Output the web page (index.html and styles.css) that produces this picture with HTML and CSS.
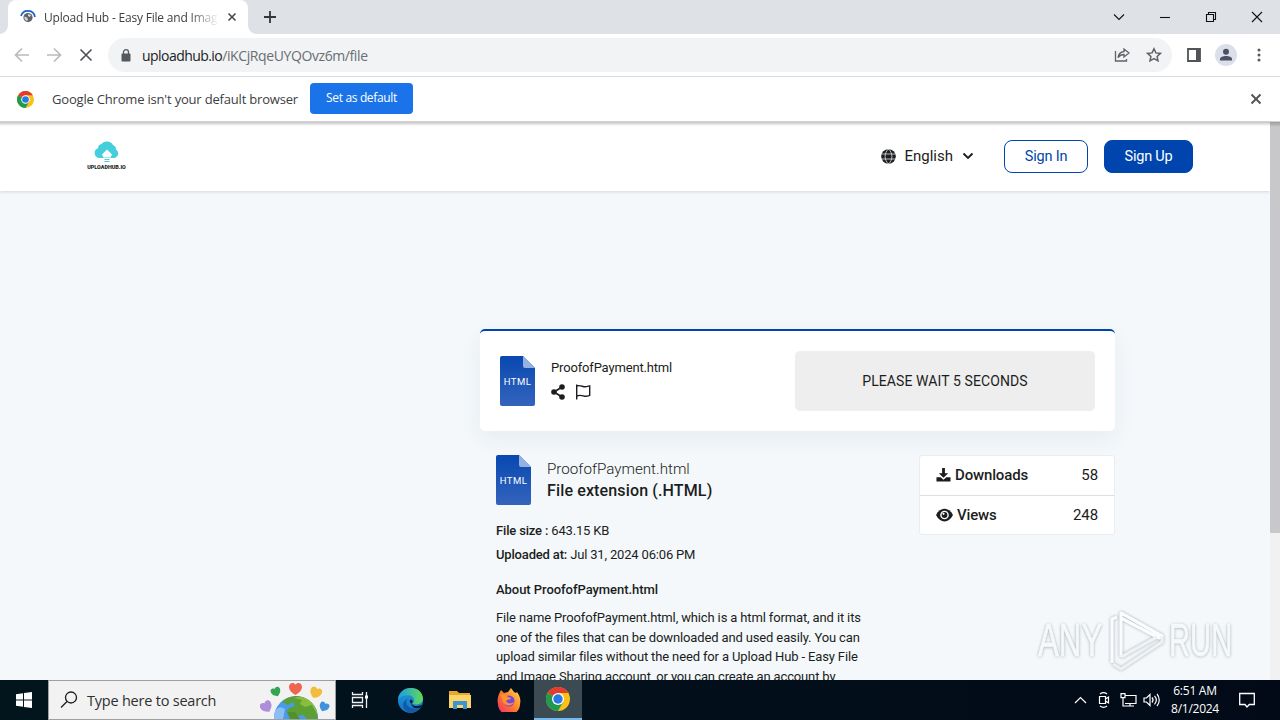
FILE: index.html
```html
<!DOCTYPE html>
<html lang="en">
  <head>
    <meta charset="UTF-8" />
    <title>Upload Hub - Easy File and Image Sharing</title>
    <link rel="stylesheet" href="styles.css">
  </head>
  <body>
    <svg width="0" height="0" class="defs">
      <defs>
        <linearGradient id="docFill" x1="0" y1="0" x2="0" y2="1">
          <stop offset="0" stop-color="#0848b0" />
          <stop offset="1" stop-color="#3464bd" />
        </linearGradient>
        <linearGradient id="edgeGreen" x1="0" y1="0" x2="1" y2="0">
          <stop offset="0" stop-color="#1b9de2" />
          <stop offset="1" stop-color="#62d957" />
        </linearGradient>
        <linearGradient id="edgeBlue" x1="0" y1="0" x2="0" y2="1">
          <stop offset="0" stop-color="#1b9fe0" />
          <stop offset="1" stop-color="#1470c4" />
        </linearGradient>
        <linearGradient id="foxFill" x1="1" y1="0" x2="0" y2="1">
          <stop offset="0" stop-color="#ffe14a" />
          <stop offset="0.5" stop-color="#ff7a2c" />
          <stop offset="1" stop-color="#f0256e" />
        </linearGradient>
        <symbol id="chrome" viewBox="0 0 24 24">
          <circle cx="12" cy="12" r="12" fill="#fbc116" />
          <path d="M12 12 1.6 6A12 12 0 0 1 22.4 6H12z" fill="#e33b2e" />
          <path d="M1.6 6A12 12 0 0 0 12 24l5.2-9-5.2-3z" fill="#229a4d" />
          <circle cx="12" cy="12" r="6" fill="#fff" />
          <circle cx="12" cy="12" r="4.700" fill="#2878e5" />
        </symbol>
        <symbol id="doc" viewBox="0 0 35 50">
          <path d="M2 0h21l12 12v36a2 2 0 0 1-2 2H2a2 2 0 0 1-2-2V2a2 2 0 0 1 2-2z" fill="url(#docFill)" />
          <path d="M23 0l12 12H25a2 2 0 0 1-2-2z" fill="#94b1e3" />
        </symbol>
        <symbol id="heart" viewBox="0 0 12 11">
          <path d="M6 11C3 9.500 0 7 0 3.500 0-.500 4.500-1 6 1.500c1.500-2.500 6-2 6 2 0 3.500-3 6-6 7.500z" />
        </symbol>
      </defs>
    </svg>

    <div class="tabstrip">
      <i class="flare"></i>
      <div class="tab">
        <svg class="favicon" width="16" height="16" viewBox="0 0 16 16">
          <path d="M1 7A7.200 7.200 0 0 1 15 8" fill="none" stroke="#1a63c6" stroke-width="1.700" />
          <circle cx="8" cy="8.500" r="4.600" fill="#5f6368" />
          <path d="M4.500 7.500 7 8.500l1 2-1 1.500c-2-.5-3-2.500-2.500-4.500zM8 5l3 1-1 2-2-1z" fill="#d5d7da" />
        </svg>
        <span class="tab-title">Upload Hub - Easy File and Imag</span>
        <svg width="10" height="10" viewBox="0 0 10 10"><path d="M1.500 1.500l7 7M8.500 1.500l-7 7" stroke="#45484c" stroke-width="1.600" /></svg>
      </div>
      <i class="flare flare-right"></i>
      <svg class="new-tab" width="14" height="14" viewBox="0 0 14 14"><path d="M7 1v12M1 7h12" stroke="#33363a" stroke-width="1.800" /></svg>
      <div class="window-buttons">
        <svg width="12" height="12" viewBox="0 0 12 12"><path d="M1 3.500l5 5 5-5" /></svg>
        <svg width="12" height="12" viewBox="0 0 12 12"><path d="M1 6.500h10" /></svg>
        <svg width="12" height="12" viewBox="0 0 12 12"><path d="M1.500 3.500h7v7h-7zM3.500 3.500v-2h7v7h-2" /></svg>
        <svg width="12" height="12" viewBox="0 0 12 12"><path d="M1 1l10 10M11 1L1 11" /></svg>
      </div>
    </div>

    <div class="toolbar">
      <svg class="nav-off" width="16" height="16" viewBox="0 0 16 16"><path d="M15 8H2M8 1.500L1.500 8 8 14.500" /></svg>
      <svg class="nav-off" width="16" height="16" viewBox="0 0 16 16"><path d="M1 8h13M8 1.500L14.500 8 8 14.500" /></svg>
      <svg class="nav-on" width="16" height="16" viewBox="0 0 16 16"><path d="M2.500 2.500l11 11M13.500 2.500l-11 11" /></svg>
      <div class="omnibox">
        <svg width="10" height="13" viewBox="0 0 10 13"><rect x="0.500" y="4.500" width="9" height="8" rx="1" fill="#55585d" /><path d="M2.500 5V3.200a2.500 2.500 0 0 1 5 0V5" fill="none" stroke="#55585d" stroke-width="1.300" /></svg>
        <span class="url"><b>uploadhub.io</b>/iKCjRqeUYQOvz6m/file</span>
        <svg class="share" width="16" height="16" viewBox="0 0 16 16" fill="none" stroke="#5f6368" stroke-width="1.300"><path d="M1.500 4v10h11v-2" /><path d="M10 2l5 4-5 4V7.500C7 7.500 5.500 8.500 4 10.500 4.500 7 6.500 5 10 4.500z" /></svg>
        <svg width="16" height="16" viewBox="0 0 16 16"><path d="M8 1.800l1.900 4.100 4.500.5-3.300 3 .9 4.500L8 11.700l-4 2.200.9-4.500-3.300-3 4.500-.5z" fill="none" stroke="#5f6368" stroke-width="1.500" /></svg>
      </div>
      <svg class="side-panel" width="14" height="14" viewBox="0 0 14 14"><path d="M1 1h12v12H1z" fill="#fff" stroke="#505357" stroke-width="1.800" /><path d="M9 1h4v12H9z" fill="#505357" /></svg>
      <svg class="profile" width="22" height="22" viewBox="0 0 22 22"><circle cx="11" cy="11" r="11" fill="#dcdfe9" /><circle cx="11" cy="7.700" r="3" fill="#4b5064" /><path d="M5 16.500v-1.500c0-4 12-4 12 0v1.500z" fill="#4b5064" /></svg>
      <svg class="menu" width="4" height="14" viewBox="0 0 4 14" fill="#55585d"><circle cx="2" cy="2" r="1.500" /><circle cx="2" cy="7" r="1.500" /><circle cx="2" cy="12" r="1.500" /></svg>
    </div>

    <div class="infobar">
      <svg width="17" height="17"><use href="#chrome" /></svg>
      <span class="info-text">Google Chrome isn't your default browser</span>
      <button class="set-default">Set as default</button>
      <svg class="info-close" width="12" height="12" viewBox="0 0 12 12"><path d="M1.500 1.500l9 9M10.500 1.500l-9 9" stroke="#505357" stroke-width="1.900" /></svg>
    </div>

    <div class="viewport">
      <div class="page">
        <header class="site-header">
          <div class="logo">
            <svg width="26" height="23" viewBox="0 0 26 23">
              <path d="M5 17a5 5 0 0 1-1-9.700A4.500 4.500 0 0 1 7.500 3 7 7 0 0 1 19 4a4.500 4.500 0 0 1 3 4.500A4.700 4.700 0 0 1 21 17z" fill="#45cfdc" />
              <path d="M13 8.500l5 5-1.500 3h-7l-1.500-3z" fill="#fff" />
              <path d="M10.500 18h5v1h-5zM10.500 20h5v1h-5z" fill="#45cfdc" />
            </svg>
            <span>UPLOADHUB.IO</span>
          </div>
          <div class="language">
            <svg width="15" height="15" viewBox="0 0 15 15"><circle cx="7.500" cy="7.500" r="7.300" fill="#1b1d20" /><path d="M0 5h15M0 10h15M7.500 0C3 4 3 11 7.500 15M7.500 0c4.500 4 4.500 11 0 15" fill="none" stroke="#fff" stroke-width="0.700" /></svg>
            <span>English</span>
            <svg width="12" height="8" viewBox="0 0 12 8"><path d="M1.500 1.500L6 6l4.500-4.500" fill="none" stroke="#1b1d20" stroke-width="1.900" /></svg>
          </div>
          <a class="btn btn-outline">Sign In</a>
          <a class="btn btn-solid">Sign Up</a>
        </header>

        <main class="content">
          <section class="download-card">
            <div class="doc-icon"><svg width="35" height="50"><use href="#doc" /></svg><span>HTML</span></div>
            <div class="file-info">
              <div class="file-name">ProofofPayment.html</div>
              <div class="file-actions">
                <svg width="14" height="16" viewBox="0 0 14 16" fill="#1b1d20"><circle cx="11" cy="3" r="2.800" /><circle cx="3" cy="8" r="2.800" /><circle cx="11" cy="13" r="2.800" /><path d="M11 3L3 8l8 5" fill="none" stroke="#1b1d20" stroke-width="1.700" /></svg>
                <svg width="16" height="16" viewBox="0 0 16 16" fill="none" stroke="#1b1d20" stroke-width="1.400"><path d="M1.700 0.500v15" /><path d="M1.700 2c3-1.200 5 .2 7 .7 2 .4 3.500-.2 6-.9v9.500c-2.500 1-4 1.200-6 .7-2.500-.7-4-1.200-7 0" /></svg>
              </div>
            </div>
            <div class="wait">PLEASE WAIT 5 SECONDS</div>
          </section>

          <section class="details">
            <div class="about">
              <div class="file-heading">
                <div class="doc-icon"><svg width="35" height="50"><use href="#doc" /></svg><span>HTML</span></div>
                <div>
                  <div class="heading-name">ProofofPayment.html</div>
                  <div class="heading-ext">File extension (.HTML)</div>
                </div>
              </div>
              <p class="meta meta-size"><b>File size :</b> 643.15 KB</p>
              <p class="meta"><b>Uploaded at:</b> Jul 31, 2024 06:06 PM</p>
              <h3>About ProofofPayment.html</h3>
              <p class="description">
                <span>File name ProofofPayment.html, which is a html format, and it its</span>
                <span>one of the files that can be downloaded and used easily. You can</span>
                <span>upload similar files without the need for a Upload Hub - Easy File</span>
                <span>and Image Sharing account, or you can create an account by</span>
              </p>
            </div>
            <div class="stats">
              <div class="stat">
                <svg width="15" height="16" viewBox="0 0 16 16" fill="#1b1d20"><path d="M6.500 0.500h3V6h3.500L8 11 3 6h3.500z" /><path d="M0.500 10.500H5l3 2.500 3-2.500h4.500V15h-15z" /></svg>
                <b>Downloads</b><span>58</span>
              </div>
              <div class="stat">
                <svg width="17" height="14" viewBox="0 0 17 14"><path d="M0 7c4-8.500 13-8.500 17 0-4 8.500-13 8.500-17 0z" fill="#1b1d20" /><circle cx="8.500" cy="7" r="4.300" fill="#fff" /><circle cx="8.500" cy="7" r="2.900" fill="#1b1d20" /><circle cx="7.500" cy="5.800" r="1.100" fill="#fff" /></svg>
                <b>Views</b><span>248</span>
              </div>
            </div>
          </section>
        </main>
      </div>
      <div class="scrollbar"><div class="thumb"></div></div>
      <div class="watermark">
        <span>ANY</span>
        <svg width="60" height="64" viewBox="0 0 60 64" fill="none" stroke="#fafcfd" stroke-width="3.200" stroke-linejoin="round">
          <path d="M11 9L6 11v44" />
          <path d="M15 49V5l41 23-3 2-38-20" />
          <path d="M15 49l36-20M7 56l8 5 41-27v-6" stroke="#eff2f4" />
        </svg>
        <span class="run">RUN</span>
      </div>
    </div>

    <div class="taskbar">
      <svg class="start" width="16" height="16" viewBox="0 0 16 16" fill="#fff"><path d="M0 2.300l7-1v6.200H0zM8 1.100L16 0v7.500H8zM0 8.500h7v6.200l-7-1zM8 8.500h8V16l-8-1.100z" /></svg>
      <div class="search">
        <svg width="18" height="18" viewBox="0 0 18 18" fill="none" stroke="#1c1c1c" stroke-width="1.300"><circle cx="11" cy="6.500" r="5.500" /><path d="M7 10.500L1 16.500" /></svg>
        <span>Type here to search</span>
        <svg class="earth" width="70" height="38" viewBox="0 0 70 38">
          <defs><clipPath id="globe"><circle cx="36" cy="37" r="22" /></clipPath></defs>
          <g clip-path="url(#globe)">
            <path d="M0 0h70v38H0z" fill="#4a9bea" />
            <path d="M14 32c3-7 8-6 11-4l-2 10H14z" fill="#8cbdf5" />
            <path d="M22 21c5-6 16-8 23-4 9 4 12 12 13 21H47l-4-4-7 1-4-4-6 0 3-4 6-2-2-4-5 3z" fill="#5c9f35" />
            <path d="M34 17l8 2-2 4 5 3 7-2 5 9V22L46 14z" fill="#8bbd3d" />
            <path d="M27 31l8 0 5 7H30z" fill="#528f2e" />
          </g>
          <use href="#heart" x="29" y="2" width="13" height="12" fill="#ef6552" />
          <use href="#heart" x="11" y="6" width="10" height="10" fill="#37a454" transform="rotate(-22 16 11)" />
          <use href="#heart" x="50" y="6" width="12" height="12" fill="#f3bd3c" transform="rotate(22 56 11)" />
          <use href="#heart" x="0" y="20" width="12" height="12" fill="#ae8ddd" transform="rotate(-30 6 25)" />
          <use href="#heart" x="59" y="21" width="10" height="10" fill="#4192dc" transform="rotate(25 64 26)" />
        </svg>
      </div>
      <div class="task task-view"><svg width="18" height="18" viewBox="0 0 18 18" fill="none" stroke="#eceff1" stroke-width="1.300"><path d="M1.500 1v2.500h10V1M1.500 6.500h10v5h-10zM1.500 17v-2.500h10V17M15.500 1v16" /><path d="M14 4.500h3v3h-3z" fill="#fff" stroke="none" /></svg></div>
      <div class="task"><svg width="25" height="25" viewBox="0 0 24 24"><circle cx="12" cy="12" r="12" fill="url(#edgeBlue)" /><path d="M0 11C1-3 23-4 24 10c0 5-6 7-10 5 3-3 1-8-4-8C5 7 1 9 0 11z" fill="url(#edgeGreen)" /><path d="M8 12c-1 5 4 10 13 7-3 5-9 6-13 3-5-4-4-10 2-12z" fill="#1558a6" /><path d="M13 15c-2-1-2-3-1-4 3 1 2 3 1 4z" fill="#06182a" /><path d="M13 15c2 3 6 3 10 1l-1 2.500c-5 2-9 0-9-3.500z" fill="#06182a" /></svg></div>
      <div class="task"><svg width="22" height="20" viewBox="0 0 22 20"><path d="M0 1h8l2 2h11v15H0z" fill="#e8a72d" /><path d="M0 5h22v13H0z" fill="#fcd566" /><path d="M4 19v-8h14v8h-4v-4H8v4z" fill="#3b93d8" /></svg></div>
      <div class="task"><svg width="24" height="24" viewBox="0 0 24 24"><path d="M2 6l2-4 3 3 4-1 3-4 3 4 2 1 1-1c3 4 4 8 3 12a11 11 0 0 1-22 0C0 12 1 9 2 6z" fill="url(#foxFill)" /><circle cx="12" cy="13" r="5.500" fill="#7346df" /><path d="M3 7c3-1 6 0 8 2l3 1c0 2-4 1-5 3 2 3 5 3 8 1-1 4-9 5-11 0-1-3-1-5-3-7z" fill="#ff922f" /></svg></div>
      <div class="task task-active"><svg width="24" height="24"><use href="#chrome" /></svg></div>
      <div class="tray">
        <svg width="13" height="8" viewBox="0 0 13 8"><path d="M1 7l5.500-5.500L12 7" /></svg>
        <svg width="14" height="16" viewBox="0 0 14 16"><path d="M2.500 4.500h6v7h-6zM8.500 7l3-2v6l-3-2M3 2c2-1.500 5-1.500 7 0M3 14c2 1.500 5 1.500 7 0" /></svg>
        <svg width="17" height="14" viewBox="0 0 17 14"><path d="M5 2.500h11v8H5M10 10.500V13M6 13h8M1 .700h4v4H1zM3 4.700V13h3" /></svg>
        <svg width="18" height="14" viewBox="0 0 18 14"><path d="M1 5h2.500L7 1.500v11L3.500 9H1zM9 4.500c1.300 1.500 1.300 3.500 0 5M11.500 2.800c2.200 2.500 2.200 6 0 8.500M14 1c3 3.500 3 8.500 0 12" /></svg>
      </div>
      <div class="clock"><span>6:51 AM</span><span>8/1/2024</span></div>
      <svg class="notify" width="16" height="16" viewBox="0 0 16 16"><path d="M.700 1.500h14.600v11h-5L8 15l-2-2.500H.700z" fill="none" stroke="#fff" stroke-width="1.300" /></svg>
    </div>
  </body>
</html>
```
FILE: styles.css
```css
* {
  box-sizing: border-box;
}
body {
  margin: 0;
  width: 1280px;
  height: 720px;
  overflow: hidden;
  display: flex;
  flex-direction: column;
  font-family: Roboto, sans-serif;
  color: #1b1d20;
  white-space: nowrap;
}
svg {
  display: block;
  flex: none;
}
.defs {
  position: absolute;
}
p,
h3 {
  margin: 0;
}

/* browser chrome */
.tabstrip,
.toolbar,
.infobar,
.taskbar {
  flex: none;
  display: flex;
  align-items: center;
  font-family: "Open Sans", sans-serif;
}
.tabstrip {
  height: 34px;
  background: #dee1e6;
}
.flare {
  width: 8px;
  height: 8px;
  align-self: flex-end;
  background: radial-gradient(circle at 0 0, transparent 7.5px, #fff 8px);
}
.flare-right {
  background: radial-gradient(circle at 100% 0, transparent 7.5px, #fff 8px);
}
.tab {
  display: flex;
  align-items: center;
  width: 240px;
  height: 34px;
  padding: 0 11px 0 12px;
  background: #fff;
  border-radius: 8px 8px 0 0;
}
.tab-title {
  width: 173px;
  margin: 0 10px 0 8px;
  overflow: hidden;
  font-size: 12px;
  letter-spacing: -0.2px;
  color: #3c4043;
  -webkit-mask-image: linear-gradient(90deg, #000 145px, transparent 175px);
}
.new-tab {
  margin-left: 7px;
}
.window-buttons {
  display: flex;
  gap: 34px;
  margin-left: auto;
  margin-right: 17px;
}
.window-buttons path {
  fill: none;
  stroke: #111;
  stroke-width: 1.1;
}
.toolbar {
  height: 43px;
  padding-left: 14px;
  background: #fff;
  border-bottom: 1px solid #dadce0;
}
.nav-off,
.nav-on {
  margin-right: 16px;
  fill: none;
  stroke: #b9bbbe;
  stroke-width: 1.7;
}
.nav-on {
  margin-right: 14px;
  stroke: #505357;
}
.omnibox {
  display: flex;
  align-items: center;
  width: 1064px;
  height: 34px;
  padding: 0 10px 0 13px;
  background: #f1f3f4;
  border-radius: 17px;
}
.url {
  margin-left: 11px;
  font-size: 14px;
  letter-spacing: -0.4px;
  color: #6a6e73;
}
.url b {
  font-weight: 400;
  letter-spacing: -0.55px;
  color: #202124;
}
.share {
  margin-left: auto;
  margin-right: 16px;
}
.side-panel {
  margin-left: 15px;
}
.profile {
  margin-left: 14px;
}
.menu {
  margin-left: 20px;
}
.infobar {
  height: 45px;
  padding: 0 18px 0 17px;
  background: #fff;
  border-bottom: 1px solid #d0d2d5;
}
.info-text {
  width: 246px;
  margin: 0 12px 0 18px;
  font-size: 13px;
  letter-spacing: -0.19px;
  color: #3c4043;
}
.set-default {
  width: 103px;
  height: 31px;
  margin-bottom: 2px;
  padding: 0 0 1px;
  border: 0;
  border-radius: 4px;
  background: #1a73e8;
  color: #fff;
  font: 12px "Open Sans", sans-serif;
  letter-spacing: -0.35px;
}
.info-close {
  margin-left: auto;
}

/* page */
.viewport {
  position: relative;
  height: 558px;
  flex: none;
  display: flex;
  overflow: hidden;
}
.page {
  width: 1270px;
  background: #f4f8fb;
}
.site-header {
  display: flex;
  align-items: center;
  height: 69px;
  padding: 0 77px 0 87px;
  background: linear-gradient(#c4c4c4, #fff 4px);
  box-shadow: 0 1px 3px rgba(30, 40, 60, 0.15);
}
.logo {
  display: flex;
  flex-direction: column;
  align-items: center;
  width: 39px;
  margin-bottom: 2px;
  font-size: 5.4px;
  line-height: 6px;
  font-weight: 900;
}
.language {
  display: flex;
  align-items: center;
  margin-left: auto;
  margin-right: 30px;
  margin-bottom: 1px;
}
.language span {
  margin: 0 9px 0 8px;
  font-size: 15px;
}
.btn {
  height: 33px;
  line-height: 31px;
  text-align: center;
  border: 1px solid #0045ad;
  border-radius: 8px;
  font-size: 14.5px;
  letter-spacing: -0.2px;
}
.btn-outline {
  width: 84px;
  color: #0045ad;
}
.btn-solid {
  width: 89px;
  margin-left: 16px;
  background: #0045ad;
  color: #fff;
}
.content {
  width: 635px;
  margin: 138px 0 0 480px;
}
.download-card {
  display: flex;
  height: 102px;
  padding: 20px 20px 0;
  background: #fff;
  border-top: 2px solid #0045ad;
  border-radius: 5px;
  box-shadow: 0 8px 22px rgba(30, 50, 70, 0.06);
}
.doc-icon {
  display: grid;
  width: 35px;
  height: 50px;
}
.doc-icon svg,
.doc-icon span {
  grid-area: 1 / 1;
}
.doc-icon span {
  place-self: center;
  font-size: 9.5px;
  letter-spacing: 0.4px;
  color: #fff;
}
.download-card .doc-icon {
  margin-top: 5px;
}
.file-info {
  margin: 9px 0 0 16px;
}
.file-name {
  font-size: 13px;
  line-height: 16px;
  letter-spacing: -0.16px;
}
.file-actions {
  display: flex;
  gap: 10px;
  margin-top: 8px;
}
.wait {
  width: 300px;
  height: 60px;
  margin-left: auto;
  background: #eee;
  border-radius: 5px;
  font-size: 14px;
  line-height: 60px;
  letter-spacing: 0.1px;
  text-align: center;
}
.details {
  display: flex;
  align-items: flex-start;
  justify-content: space-between;
  padding: 24px 0 0 16px;
}
.file-heading {
  display: flex;
  gap: 16px;
}
.heading-name {
  margin-top: 3px;
  font-size: 15.2px;
  font-weight: 300;
  line-height: 22px;
}
.heading-ext {
  font-size: 16px;
  font-weight: 500;
  line-height: 22px;
  letter-spacing: 0.14px;
}
.meta {
  font-size: 13px;
  line-height: 24px;
  letter-spacing: -0.17px;
}
.meta b,
.stat b {
  font-weight: 500;
}
.meta-size {
  margin-top: 14px;
}
h3 {
  margin-top: 13px;
  font-size: 13px;
  line-height: 20px;
  font-weight: 500;
  letter-spacing: -0.05px;
}
.description {
  margin-top: 8px;
  font-size: 13px;
  line-height: 19.6px;
  letter-spacing: -0.135px;
}
.description span {
  display: block;
}
.stats {
  width: 196px;
  background: #fff;
  border: 1px solid #e8edf0;
  border-radius: 3px;
}
.stat {
  display: flex;
  align-items: center;
  height: 39px;
  padding: 0 16px 2px;
  font-size: 15px;
}
.stat + .stat {
  padding-bottom: 0;
  border-top: 1px solid #dde1e4;
}
.stat b {
  margin-left: 4px;
  letter-spacing: -0.15px;
}
.stat span {
  margin-left: auto;
  letter-spacing: -0.1px;
}
.scrollbar {
  width: 10px;
  background: #f1f1f1;
}
.thumb {
  height: 411px;
  background: linear-gradient(#9c9c9d, #c8c8ca 5px);
}
.watermark {
  position: absolute;
  left: 1038px;
  top: 486px;
  display: flex;
  align-items: center;
  color: #f6f9fa;
  font-family: "Liberation Sans", sans-serif;
  font-size: 46px;
  line-height: 64px;
  text-shadow: 0 0 3px #a5abb0, 0 1px 4px #c2c6ca;
  -webkit-text-stroke: 0.8px #f6f9fa;
}
.watermark span {
  width: 66px;
  transform: scaleX(0.68);
  transform-origin: left;
}
.watermark .run {
  transform: scaleX(0.635);
}
.watermark svg {
  margin: 0 3px 0 2px;
  filter: drop-shadow(0 0 1.5px #a5abb0);
}

/* windows taskbar */
.taskbar {
  height: 40px;
  background: linear-gradient(90deg, #02151d, #020a18);
  color: #fff;
}
.start {
  margin: 0 16px;
}
.search {
  display: flex;
  align-items: flex-end;
  width: 288px;
  height: 40px;
  padding: 0 5px 0 11px;
  background: #f2f2f2;
  border: 1px solid #9da1a3;
  color: #303030;
}
.search > svg:first-child {
  margin-bottom: 10px;
}
.search span {
  margin: 0 auto 0 9px;
  font-size: 14.5px;
  line-height: 37px;
  letter-spacing: -0.22px;
}
.task {
  display: flex;
  align-items: center;
  justify-content: center;
  width: 49px;
  height: 40px;
}
.task-view {
  width: 48px;
  margin-right: 2px;
}
.task-active {
  width: 48px;
  margin-left: 1px;
  background: #3b4a53;
  border-bottom: 2px solid #76b9ed;
}
.tray {
  display: grid;
  grid-template-columns: repeat(4, 24px);
  align-items: center;
  justify-items: center;
  margin-left: auto;
  margin-right: 7px;
}
.tray path {
  fill: none;
  stroke: #fff;
  stroke-width: 1.2;
}
.clock {
  display: flex;
  flex-direction: column;
  align-items: center;
  width: 48px;
  font-size: 12px;
  line-height: 18px;
  letter-spacing: -0.25px;
}
.notify {
  margin: 0 25px 0 20px;
}
```
